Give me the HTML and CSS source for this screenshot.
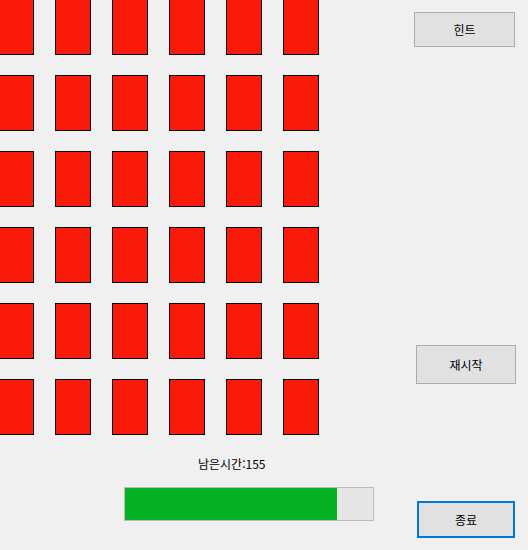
FILE: index.html
```html
<!DOCTYPE html>
<html lang="ko">
<head>
    <meta charset="UTF-8">
    <title>카드 게임</title>
    <link rel="stylesheet" href="styles.css">
</head>
<body>

<div class="window">
    <!-- 카드 판 -->
    <div class="board-area">
        <div class="card-grid">
            <div class="card"></div><div class="card"></div><div class="card"></div><div class="card"></div><div class="card"></div><div class="card"></div>
            <div class="card"></div><div class="card"></div><div class="card"></div><div class="card"></div><div class="card"></div><div class="card"></div>
            <div class="card"></div><div class="card"></div><div class="card"></div><div class="card"></div><div class="card"></div><div class="card"></div>
            <div class="card"></div><div class="card"></div><div class="card"></div><div class="card"></div><div class="card"></div><div class="card"></div>
            <div class="card"></div><div class="card"></div><div class="card"></div><div class="card"></div><div class="card"></div><div class="card"></div>
            <div class="card"></div><div class="card"></div><div class="card"></div><div class="card"></div><div class="card"></div><div class="card"></div>
        </div>
        <div class="time-label">남은시간:155</div>
        <div class="progress">
            <div class="progress-fill" style="width: 85.5%;"></div>
        </div>
    </div>

    <!-- 버튼 -->
    <div class="side-buttons">
        <button class="btn hint-btn">힌트</button>
        <button class="btn restart-btn">재시작</button>
        <button class="btn exit-btn">종료</button>
    </div>
</div>

</body>
</html>
```

FILE: styles.css
```css
body {
    margin: 0;
    background-color: #f0f0f0;
    font-family: "Noto Sans CJK KR", "Liberation Sans", sans-serif;
    font-size: 12px;
    color: #000;
    overflow: hidden;
}
.window {
    display: flex;
    width: 528px;
    height: 550px;
}
.board-area {
    width: 414px;
    display: flex;
    flex-direction: column;
}
.card-grid {
    display: grid;
    grid-template-columns: repeat(6, 36px);
    grid-auto-rows: 56px;
    column-gap: 21px;
    row-gap: 20px;
    margin: -1px 0 0 -2px;
}
.card {
    background-color: #f91a0a;
    border: 1px solid #000;
}
.time-label {
    margin-top: 21px;
    margin-left: 198px;
    line-height: 16px;
    height: 16px;
}
.progress {
    margin-top: 15px;
    margin-left: 124px;
    width: 248px;
    height: 32px;
    border: 1px solid #bcbcbc;
    background-color: #e6e6e6;
}
.progress-fill {
    height: 100%;
    background-color: #05b025;
}
.side-buttons {
    display: flex;
    flex-direction: column;
    width: 114px;
}
.btn {
    font-family: "Noto Sans CJK KR", "Liberation Sans", sans-serif;
    font-size: 12px;
    color: #000;
    background-color: #e1e1e1;
    border: 1px solid #adadad;
    padding: 0;
    box-sizing: border-box;
}
.hint-btn {
    margin-top: 12px;
    width: 101px;
    height: 35px;
}
.restart-btn {
    margin-top: 298px;
    margin-left: 2px;
    width: 100px;
    height: 39px;
}
.exit-btn {
    margin-top: 117px;
    margin-left: 3px;
    width: 98px;
    height: 37px;
    border: 2px solid #0078d7;
}
```
